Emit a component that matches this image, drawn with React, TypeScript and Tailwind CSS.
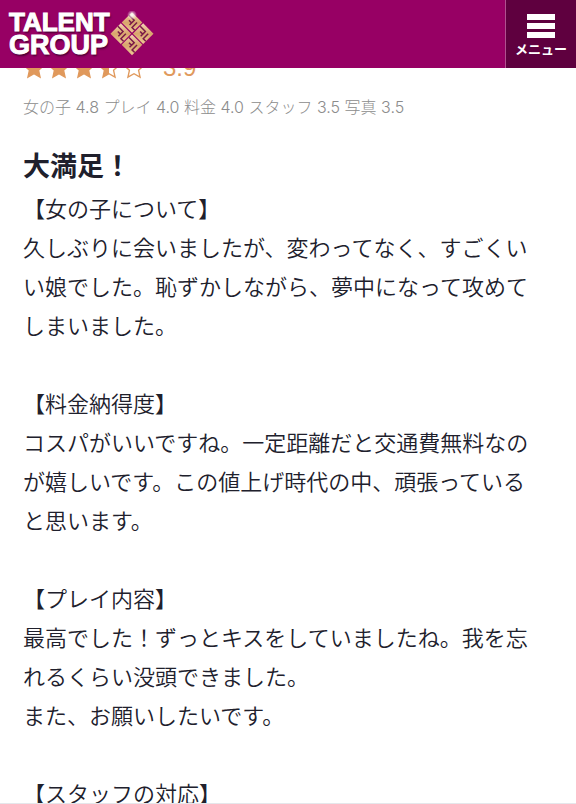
const FONT = "font-['Liberation_Sans','Noto_Sans_CJK_JP',sans-serif]";

const STAR = 'M12 1.6l3.1 7 7.5.8-5.6 5.1 1.6 7.5L12 18.2 5.4 22 7 14.5 1.4 9.4l7.5-.8z';

const stars: ('full' | 'half' | 'empty')[] = ['full', 'full', 'full', 'half', 'empty'];

const scores = [
  { label: '女の子', value: '4.8' },
  { label: 'プレイ', value: '4.0' },
  { label: '料金', value: '4.0' },
  { label: 'スタッフ', value: '3.5' },
  { label: '写真', value: '3.5' },
];

const sections = [
  {
    heading: '【女の子について】',
    lines: ['久しぶりに会いましたが、変わってなく、すごくいい娘でした。恥ずかしながら、夢中になって攻めてしまいました。'],
  },
  {
    heading: '【料金納得度】',
    lines: ['コスパがいいですね。一定距離だと交通費無料なのが嬉しいです。この値上げ時代の中、頑張っていると思います。'],
  },
  {
    heading: '【プレイ内容】',
    lines: ['最高でした！ずっとキスをしていましたね。我を忘れるくらい没頭できました。', 'また、お願いしたいです。'],
  },
  { heading: '【スタッフの対応】', lines: [] },
];

function Emblem() {
  return (
    <svg viewBox="0 0 46 46" className="h-[46px] w-[46px]" aria-hidden="true">
      <defs>
        <linearGradient id="gold" x1="0" y1="0" x2="1" y2="1">
          <stop offset="0" stopColor="#f3d3b4" />
          <stop offset="0.5" stopColor="#d9a56c" />
          <stop offset="1" stopColor="#edc795" />
        </linearGradient>
        <radialGradient id="glow">
          <stop offset="0" stopColor="#fff" />
          <stop offset="1" stopColor="#fff" stopOpacity="0" />
        </radialGradient>
        {/* Square tile cut by two hooked grooves */}
        <g id="tile">
          <rect width="14.6" height="14.6" fill="url(#gold)" />
          <path d="M0 4.2H7.3V10.8M3.6 7.9H7.3M14.6 10.8H10.9V3.8" fill="none" stroke="#7a1a48" strokeWidth="1.5" />
        </g>
      </defs>
      <g transform="translate(22 1.2) rotate(45)">
        <use href="#tile" />
        <use href="#tile" x="15.8" />
        <use href="#tile" y="15.8" />
        <use href="#tile" x="15.8" y="15.8" />
      </g>
      <circle cx="22" cy="4" r="5" fill="url(#glow)" />
    </svg>
  );
}

function Star({ kind }: { kind: 'full' | 'half' | 'empty' }) {
  return (
    <svg viewBox="0 0 24 24" className="h-[22px] w-[22px]" aria-hidden="true">
      <clipPath id="left-half">
        <rect width="12" height="24" />
      </clipPath>
      {kind !== 'empty' && <path d={STAR} fill="#e0995c" clipPath={kind === 'half' ? 'url(#left-half)' : undefined} />}
      <path d={STAR} fill="none" stroke="#e0995c" strokeWidth="1.5" />
    </svg>
  );
}

function Header() {
  return (
    <header className="flex h-[68px] shrink-0 items-stretch justify-between bg-[#970064]">
      <a href="#top" className="flex items-center pl-[9px]" aria-label="TALENT GROUP">
        <span className="flex flex-col leading-[23px] font-bold text-white [-webkit-text-stroke:1px_white] [text-shadow:1px_2px_2px_#4a0032]">
          <span className="text-[26px]">TALENT</span>
          <span className="text-[27px]">GROUP</span>
        </span>
        <Emblem />
      </a>
      <button
        type="button"
        className="flex w-[71px] flex-col items-center gap-1 border-l border-[#b0508f] bg-[#5f003f] pt-[14px] text-white"
      >
        <span className="flex w-7 flex-col gap-[3px]" aria-hidden="true">
          <span className="h-[6px] bg-white" />
          <span className="h-[6px] bg-white" />
          <span className="h-[6px] bg-white" />
        </span>
        <span className="text-[13px] leading-4 font-bold">メニュー</span>
      </button>
    </header>
  );
}

export default function App() {
  return (
    <div className={`flex h-screen flex-col overflow-hidden border-b border-gray-200 bg-white text-[#20202c] ${FONT}`}>
      <Header />
      <main className="min-h-0 flex-1 overflow-hidden pr-8 pl-[23px]">
        {/* Rating row, partly scrolled under the header */}
        <div className="-mt-3 flex h-6 items-center">
          <div className="flex gap-[3px]" role="img" aria-label="3.9 / 5">
            {stars.map((kind, i) => (
              <Star key={i} kind={kind} />
            ))}
          </div>
          <span className="ml-[18px] text-[24px] leading-6 text-[#e0995c]">3.9</span>
        </div>

        <p className="mt-[15px] font-['Inter','Noto_Sans_CJK_JP',sans-serif] text-base leading-6 font-light text-[#8c8c8c]">
          {scores.map(({ label, value }) => `${label} ${value}`).join(' ')}
        </p>

        <h1 className="mt-7 text-[27px] leading-10 font-bold">大満足！</h1>

        <div className="mt-[3px] flex flex-col gap-[39px] text-[22px] leading-[39px] font-[350]">
          {sections.map(({ heading, lines }) => (
            <section key={heading}>
              <h2 className="font-[350]">{heading}</h2>
              {lines.map((line) => (
                <p key={line}>{line}</p>
              ))}
            </section>
          ))}
        </div>
      </main>
    </div>
  );
}
